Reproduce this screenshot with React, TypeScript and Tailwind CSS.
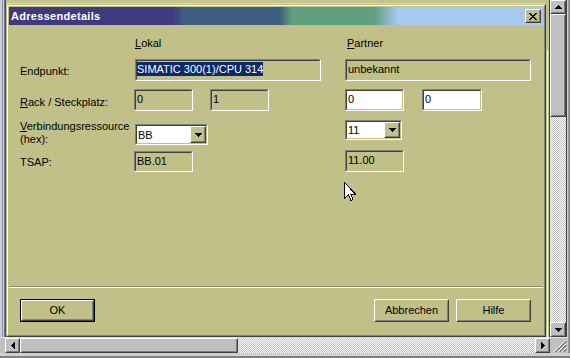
import clsx from 'clsx';
import type { ReactNode } from 'react';

// sunken edit box (classic 3d look)
function Sunken({ className, white, children }: { className?: string; white?: boolean; children?: ReactNode }) {
  return (
    <div className={clsx('border border-t-[#808080] border-l-[#808080] border-b-white border-r-white', className)}>
      <div
        className={clsx(
          'h-full overflow-hidden border border-t-[#404040] border-l-[#404040] border-b-[#c0c088] border-r-[#c0c088]',
          white ? 'bg-white' : 'bg-[#c0c088]'
        )}
      >
        {children}
      </div>
    </div>
  );
}

function Raised({ className, children }: { className?: string; children?: ReactNode }) {
  return (
    <div className={clsx('border border-t-white border-l-white border-b-[#404040] border-r-[#404040]', className)}>
      <div className="flex h-full items-center justify-center border border-t-transparent border-l-transparent border-b-[#808080] border-r-[#808080]">
        {children}
      </div>
    </div>
  );
}

function Tri({ dir }: { dir: 'up' | 'down' | 'left' | 'right' }) {
  const pts =
    dir === 'down' ? '0,0 7,0 3.5,4' :
    dir === 'up' ? '0,4 7,4 3.5,0' :
    dir === 'left' ? '4,0 4,7 0,3.5' : '0,0 0,7 4,3.5';
  const w = dir === 'up' || dir === 'down' ? 7 : 4;
  const h = dir === 'up' || dir === 'down' ? 4 : 7;
  return (
    <svg width={w} height={h} viewBox={`0 0 ${w} ${h}`} shapeRendering="crispEdges">
      <polygon points={pts} fill="#000" />
    </svg>
  );
}

function FieldText({ children }: { children: ReactNode }) {
  return <div className="whitespace-nowrap pl-[1px] pt-[1px] leading-[14px]">{children}</div>;
}

function Combo({ className, value }: { className: string; value: string }) {
  return (
    <Sunken white className={className}>
      <div className="flex h-full items-center">
        <span className="flex-1 pl-[1px] leading-[14px]">{value}</span>
        <Raised className="h-full w-[16px] bg-[#c0c088]">
          <Tri dir="down" />
        </Raised>
      </div>
    </Sunken>
  );
}

function CloseGlyph() {
  const rows = [
    [0, 1, 6, 7],
    [1, 2, 5, 6],
    [2, 3, 4, 5],
    [3, 4],
    [2, 3, 4, 5],
    [1, 2, 5, 6],
    [0, 1, 6, 7],
  ];
  return (
    <svg width="8" height="7" viewBox="0 0 8 7" shapeRendering="crispEdges">
      {rows.map((r, y) => r.map((x) => <rect key={`${x}-${y}`} x={x} y={y} width="1" height="1" fill="#000" />))}
    </svg>
  );
}

const DITHER = 'bg-[image:repeating-conic-gradient(#c0c0c0_0%_25%,#ffffff_0%_50%)] bg-[length:2px_2px]';

function Dialog() {
  return (
    <div className="flex h-[333px] flex-col border border-t-[#c0c088] border-l-[#c0c088] border-b-[#404040] border-r-[#404040]">
      <div className="flex flex-1 flex-col border border-t-white border-l-white border-b-[#808080] border-r-[#808080] p-[1px]">
        {/* Title bar */}
        <div className="flex h-[18px] items-center justify-between pl-[2px] pr-[2px] bg-[linear-gradient(90deg,#3f3a80_0px,#3f3a80_163px,#3f5f7f_175px,#3f5f7f_271px,#5f9f7f_283px,#5f9f7f_365px,#a6caf0_389px)]">
          <span className="font-bold tracking-[0.3px] text-white">Adressendetails</span>
          <Raised className="h-[14px] w-[16px] bg-[#c0c088]">
            <CloseGlyph />
          </Raised>
        </div>

        {/* Form */}
        <div className="pl-[11px]">
          <div className="mt-[12px] flex h-[13px]">
            <div className="w-[114px]" />
            <div className="w-[211px] pl-[1px]">
              <u className="underline-offset-1">L</u>okal
            </div>
            <div className="pl-[2px]">
              <u className="underline-offset-1">P</u>artner
            </div>
          </div>

          {/* Endpunkt */}
          <div className="mt-[9px] flex items-start">
            <div className="mt-[6px] w-[114px]">Endpunkt:</div>
            <div className="w-[211px] pl-[1px]">
              <Sunken className="h-[22px] w-[186px]">
                <div className="whitespace-nowrap pt-[1px]">
                  <span className="inline-block h-[14px] bg-[#0a2a6a] leading-[14px] text-white">SIMATIC 300(1)/CPU 314</span>
                </div>
              </Sunken>
            </div>
            <Sunken className="h-[22px] w-[186px]">
              <FieldText>unbekannt</FieldText>
            </Sunken>
          </div>

          {/* Rack / Steckplatz */}
          <div className="mt-[8px] flex items-start">
            <div className="mt-[7px] w-[114px]">
              <u className="underline-offset-1">R</u>ack / Steckplatz:
            </div>
            <div className="flex w-[211px]">
              <Sunken className="h-[22px] w-[59px]">
                <FieldText>0</FieldText>
              </Sunken>
              <Sunken className="ml-[17px] h-[22px] w-[59px]">
                <FieldText>1</FieldText>
              </Sunken>
            </div>
            <div className="flex">
              <Sunken white className="h-[22px] w-[59px]">
                <FieldText>0</FieldText>
              </Sunken>
              <Sunken white className="ml-[18px] h-[22px] w-[60px]">
                <FieldText>0</FieldText>
              </Sunken>
            </div>
          </div>

          {/* Verbindungsressource */}
          <div className="mt-[9px] flex items-start">
            <div className="w-[114px] whitespace-nowrap leading-[13px]">
              <u className="underline-offset-1">V</u>erbindungsressource
              <br />
              (hex):
            </div>
            <div className="w-[211px] pl-[1px] pt-[4px]">
              <Combo className="h-[21px] w-[73px]" value="BB" />
            </div>
            <Combo className="h-[20px] w-[57px]" value="11" />
          </div>

          {/* TSAP */}
          <div className="mt-[4px] flex items-start">
            <div className="mt-[6px] w-[114px]">TSAP:</div>
            <div className="w-[211px] pt-[1px]">
              <Sunken className="h-[21px] w-[59px]">
                <FieldText>BB.01</FieldText>
              </Sunken>
            </div>
            <Sunken className="h-[22px] w-[59px]">
              <FieldText>11.00</FieldText>
            </Sunken>
          </div>
        </div>

        <div className="mt-[114px] h-[2px] border-t border-t-[#8c8c68] border-b border-b-white" />

        {/* Buttons */}
        <div className="mt-[11px] flex h-[23px] pl-[11px] pr-[12px]">
          <div className="w-[75px] border border-black">
            <Raised className="h-full bg-[#c0c088]">OK</Raised>
          </div>
          <div className="flex-1" />
          <Raised className="w-[75px] bg-[#c0c088]">Abbrechen</Raised>
          <Raised className="ml-[7px] w-[75px] bg-[#c0c088]">Hilfe</Raised>
        </div>
      </div>
    </div>
  );
}

export default function App() {
  return (
    <div className="relative grid h-[358px] w-[570px] grid-cols-[550px_17px_3px] grid-rows-[337px_16px_5px] overflow-hidden bg-[#c0c088] font-['Liberation_Sans',Arial,sans-serif] text-[11px] leading-[13px] text-black">
      {/* main area */}
      <div className="flex">
        <div className="flex w-[6px]">
          <div className="w-[2px] bg-[#d0d0d0]" />
          <div className="w-[1px] bg-[#8890a8]" />
          <div className="w-[1px] bg-[#d0d0d0]" />
          <div className="w-[1px] bg-[#6a78a0]" />
          <div className="w-[1px] bg-[#3b4a7c]" />
        </div>
        <div className="flex w-[540px] flex-col">
          <div className="h-[4px] border-b border-b-[#d8d8b0] bg-[#c4c48e]" />
          <Dialog />
        </div>
        <div className="flex w-[4px]">
          <div className="w-[1px]" />
          <div className="mt-[50px] w-[1px] bg-white" />
          <div className="w-[1px]" />
          <div className="w-[1px] bg-[#404040]" />
        </div>
      </div>

      {/* vertical scrollbar */}
      <div className="flex flex-col border-r border-r-[#404040]">
        <Raised className="h-[14px] bg-[#c0c0c0]">
          <Tri dir="up" />
        </Raised>
        <Raised className="h-[103px] bg-[#c0c0c0]" />
        <div className={clsx('flex-1', DITHER)} />
        <Raised className="h-[15px] bg-[#c0c0c0]">
          <Tri dir="down" />
        </Raised>
      </div>
      <div className="flex">
        <div className="w-[1px] bg-[#d0d0d0]" />
        <div className="w-[1px] bg-[#a0a0a0]" />
        <div className="w-[1px] bg-[#808080]" />
      </div>

      {/* horizontal scrollbar */}
      <div className="flex border-t border-t-[#e0e0e0]">
        <div className="w-[5px] bg-[#c0c0c0]" />
        <Raised className="w-[15px] bg-[#c0c0c0]">
          <Tri dir="left" />
        </Raised>
        <Raised className="w-[218px] bg-[#c0c0c0]" />
        <div className={clsx('flex-1', DITHER)} />
        <Raised className="w-[15px] bg-[#c0c0c0]">
          <Tri dir="right" />
        </Raised>
      </div>
      <div className="flex items-end justify-end border-t border-t-[#e0e0e0] bg-[#c0c0c0]">
        <svg width="13" height="13" viewBox="0 0 13 13" shapeRendering="crispEdges">
          <path d="M12 1L1 12M12 5L5 12M12 9L9 12" stroke="#808080" strokeWidth="1.5" />
          <path d="M12 0L0 12M12 4L4 12M12 8L8 12" stroke="#ffffff" strokeWidth="1" />
        </svg>
      </div>
      <div className="flex">
        <div className="w-[1px] bg-[#d0d0d0]" />
        <div className="w-[1px] bg-[#a0a0a0]" />
        <div className="w-[1px] bg-[#808080]" />
      </div>

      <div className="col-span-3 border-b-2 border-b-[#808080] bg-[#d0d0d0]" />

      {/* mouse pointer */}
      <svg
        width="12"
        height="20"
        viewBox="0 0 12 20"
        className="absolute left-[344px] top-[182px]"
        shapeRendering="crispEdges"
      >
        <path d="M0.5 0.5V16.5L4.5 12.7L7 18.5L9 17.6L6.6 12H11.5Z" fill="#fff" stroke="#000" />
      </svg>
    </div>
  );
}
